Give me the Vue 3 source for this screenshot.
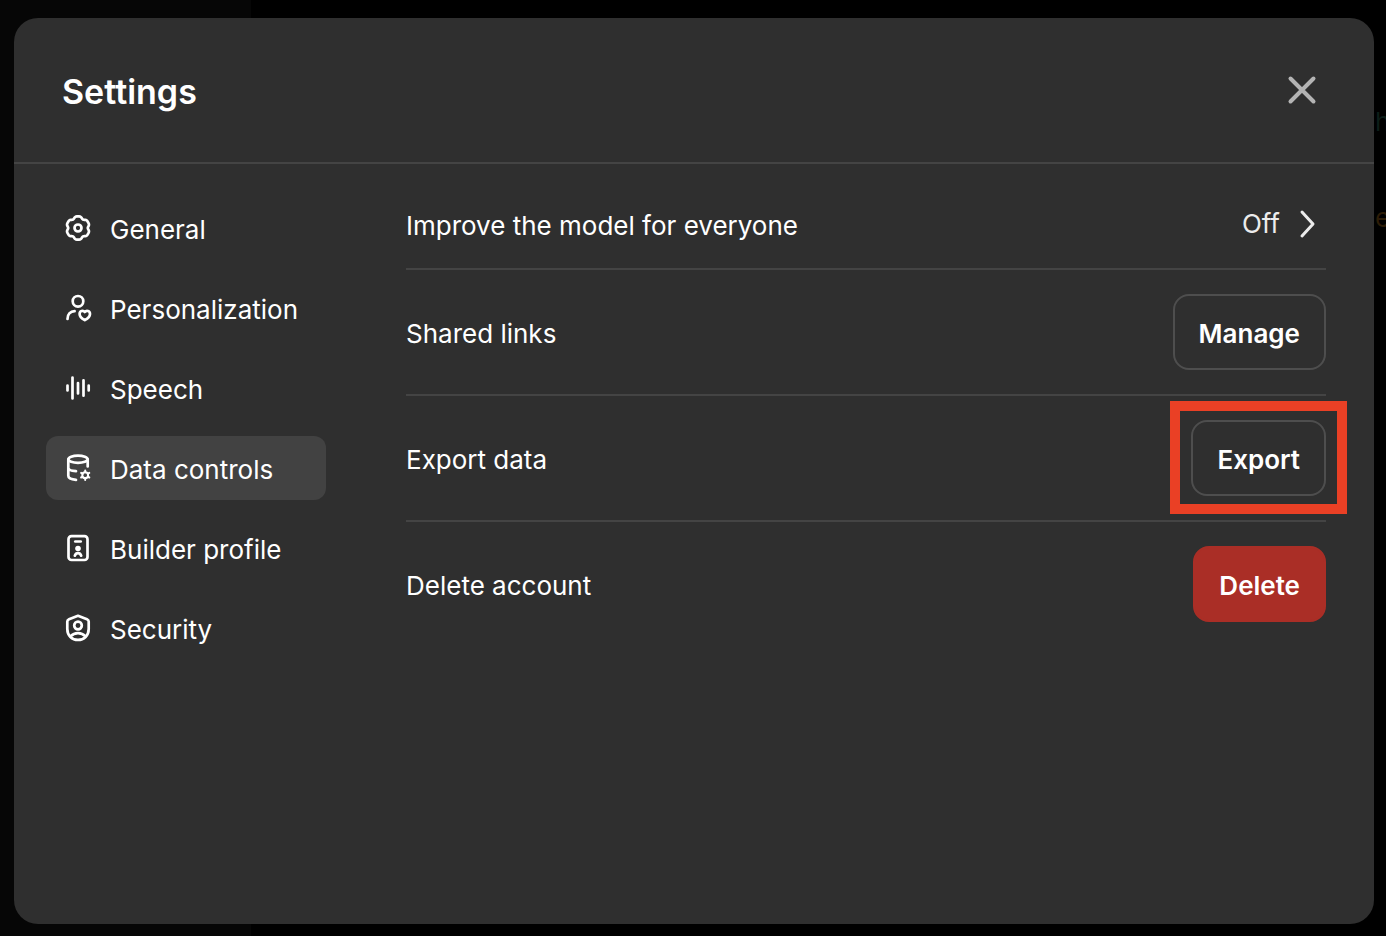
<script setup>
import { ref } from 'vue'

const tabs = [
  { id: 'general', label: 'General' },
  { id: 'personalization', label: 'Personalization' },
  { id: 'speech', label: 'Speech' },
  { id: 'data', label: 'Data controls' },
  { id: 'builder', label: 'Builder profile' },
  { id: 'security', label: 'Security' },
]
const active = ref('data')

// Closed outline with six broad lobes and tight valleys, the first lobe pointing up.
function cog(cx, cy, radius, depth) {
  const points = []
  for (let i = 0; i < 96; i++) {
    const a = (i / 96) * Math.PI * 2
    const r = radius + depth * Math.cos(6 * a) - 0.35 * depth * Math.cos(12 * a)
    points.push(`${(cx + r * Math.sin(a)).toFixed(2)} ${(cy - r * Math.cos(a)).toFixed(2)}`)
  }
  return `M${points.join('L')}Z`
}
const gear = cog(16, 16, 11, 0.9)
</script>

<template>
  <div class="backdrop">
    <div class="rail"></div>
    <span class="behind behind-green">h</span>
    <span class="behind behind-amber">e</span>
    <section class="dialog" role="dialog" aria-labelledby="dialog-title">
      <header class="header">
        <h1 id="dialog-title" class="title">Settings</h1>
        <button class="close" type="button" aria-label="Close">
          <svg viewBox="0 0 32 32"><path d="M4.500 4.500L27.500 27.500M27.500 4.500L4.500 27.500" /></svg>
        </button>
      </header>
      <div class="body">
        <nav class="nav">
          <button
            v-for="tab in tabs"
            :key="tab.id"
            type="button"
            class="tab"
            :class="{ active: tab.id === active }"
            @click="active = tab.id"
          >
            <svg class="icon" viewBox="0 0 32 32" aria-hidden="true">
              <g v-if="tab.id === 'general'">
                <path :d="gear" />
                <circle cx="16" cy="16" r="3.500" />
              </g>
              <g v-else-if="tab.id === 'personalization'">
                <circle cx="16" cy="9.300" r="5.300" />
                <path d="M5.500 27C5.300 22.500 8.300 19.300 12.600 19.200" />
                <path d="M22.800 28.200C19.700 26.400 17.600 24.400 17.600 21.900C17.600 18.700 21.200 17.900 22.800 20C24.400 17.900 28 18.700 28 21.900C28 24.400 25.900 26.400 22.800 28.200Z" />
              </g>
              <g v-else-if="tab.id === 'speech'">
                <path d="M5.500 13.500V18.500M10.500 5.500V26.500M16 11V21.500M21.500 8.300V23.700M26.700 13.500V18.500" />
              </g>
              <g v-else-if="tab.id === 'data'">
                <ellipse cx="16" cy="7.300" rx="9.700" ry="3.600" />
                <path d="M6.300 7.500V23.800C6.300 26 9.500 27.500 14 27.800M25.700 7.500V14.500M6.300 15.700C6.300 17.500 9.500 18.900 14 19.200" />
                <circle class="thin" cx="23.200" cy="23.200" r="2.900" />
                <path class="thin" d="M23.200 20.200V18.500M25.800 21.700L27.300 20.900M25.800 24.700L27.300 25.500M23.200 26.200V27.900M20.600 24.700L19.100 25.500M20.600 21.700L19.100 20.900" />
              </g>
              <g v-else-if="tab.id === 'builder'">
                <rect x="6.500" y="4.200" width="19" height="23.800" rx="3" />
                <path d="M13.300 9.500H18.700" />
                <circle class="solid" cx="16" cy="16.500" r="2.800" />
                <path d="M12.800 23.700C13.500 21.700 14.600 21.200 16 21.200C17.400 21.200 18.500 21.700 19.200 23.700" />
              </g>
              <g v-else>
                <path d="M16 3.800L25 7.200C26 7.600 26.700 8.400 26.700 9.500V17C26.700 23.600 22 27.900 16 27.900C10 27.900 5.300 23.600 5.300 17V9.500C5.300 8.400 6 7.600 7 7.200Z" />
                <circle cx="16" cy="13.500" r="3.800" />
                <path d="M8.800 24.200C10.800 21.900 13.200 21.100 16 21.100C18.800 21.100 21.200 21.900 23.200 24.200" />
              </g>
            </svg>
            <span class="label">{{ tab.label }}</span>
          </button>
        </nav>
        <main class="panel">
          <div class="row">
            <span class="label">Improve the model for everyone</span>
            <button class="toggle" type="button" aria-label="Improve the model for everyone: Off">
              <span>Off</span>
              <svg viewBox="0 0 18 32" aria-hidden="true"><path d="M4 4L15 16L4 28" /></svg>
            </button>
          </div>
          <div class="row">
            <span class="label">Shared links</span>
            <button class="btn" type="button">Manage</button>
          </div>
          <div class="row">
            <span class="label">Export data</span>
            <div class="marked">
              <button class="btn" type="button">Export</button>
            </div>
          </div>
          <div class="row">
            <span class="label">Delete account</span>
            <button class="btn danger" type="button">Delete</button>
          </div>
        </main>
      </div>
    </section>
  </div>
</template>

<style>
body {
  background: #000;
}
</style>

<style scoped>
.backdrop {
  position: relative;
  display: flex;
  box-sizing: border-box;
  min-height: 100vh;
  padding: 18px 12px 12px 14px;
  overflow: hidden;
  background: #000;
  color: #fff;
  font-family: Inter, "Liberation Sans", sans-serif;
  font-size: 26px;
  line-height: 40px;
}
.rail {
  position: absolute;
  inset: 0 auto 0 0;
  width: 251px;
  background: #060606;
}
.behind {
  position: absolute;
  left: 100%;
  margin-left: -11px;
}
.behind-green {
  top: 102px;
  color: #0c1e19;
}
.behind-amber {
  top: 198px;
  color: #2c1c06;
}
.dialog {
  position: relative;
  flex: 1;
  min-width: 0;
  border-radius: 24px;
  background: #2f2f2f;
}
.header {
  display: flex;
  align-items: center;
  justify-content: space-between;
  height: 144px;
  padding: 0 56px 0 48px;
  border-bottom: 2px solid #444;
}
.title {
  margin: 0;
  padding-top: 4px;
  font-size: 34px;
  font-weight: 600;
}
button {
  border: 0;
  background: none;
  color: inherit;
  font: inherit;
  cursor: pointer;
}
svg {
  display: block;
  fill: none;
  stroke: currentColor;
  stroke-linecap: round;
  stroke-linejoin: round;
}
.close {
  padding: 0;
  color: #b4b4b4;
}
.close svg {
  width: 32px;
  height: 32px;
  stroke-width: 4;
}
.body {
  display: flex;
  gap: 80px;
  padding: 16px 48px 32px 32px;
}
.nav {
  display: flex;
  flex-direction: column;
  flex: 0 0 280px;
  gap: 16px;
  padding-top: 16px;
}
.tab {
  display: flex;
  align-items: center;
  gap: 16px;
  height: 64px;
  padding: 0 16px;
  border-radius: 12px;
  white-space: nowrap;
}
.tab.active {
  background: #424242;
}
.label {
  padding-top: 4px;
  line-height: 36px;
}
.icon {
  width: 32px;
  height: 32px;
  stroke-width: 2.7;
}
.thin {
  stroke-width: 2;
}
.solid {
  fill: currentColor;
  stroke: none;
}
.panel {
  flex: 1;
  min-width: 0;
}
.row {
  display: flex;
  align-items: center;
  justify-content: space-between;
  padding: 24px 0;
  border-bottom: 2px solid #444;
}
.row:last-child {
  border-bottom: 0;
}
.toggle {
  display: flex;
  align-items: center;
  gap: 18px;
  padding: 0 10px 0 0;
  color: #ececec;
}
.toggle svg {
  width: 18px;
  height: 32px;
  stroke-width: 3;
}
.btn {
  height: 76px;
  padding: 4px 24px 0;
  border: 2px solid #4e4e4e;
  border-radius: 16px;
  font-weight: 600;
}
.danger {
  border-color: #aa2e26;
  background: #aa2e26;
}
.marked {
  position: relative;
}
.marked .btn {
  display: block;
}
.marked::after {
  content: "";
  position: absolute;
  inset: -19px -21px -18px;
  border: 10px solid #ea4025;
  pointer-events: none;
}
</style>
